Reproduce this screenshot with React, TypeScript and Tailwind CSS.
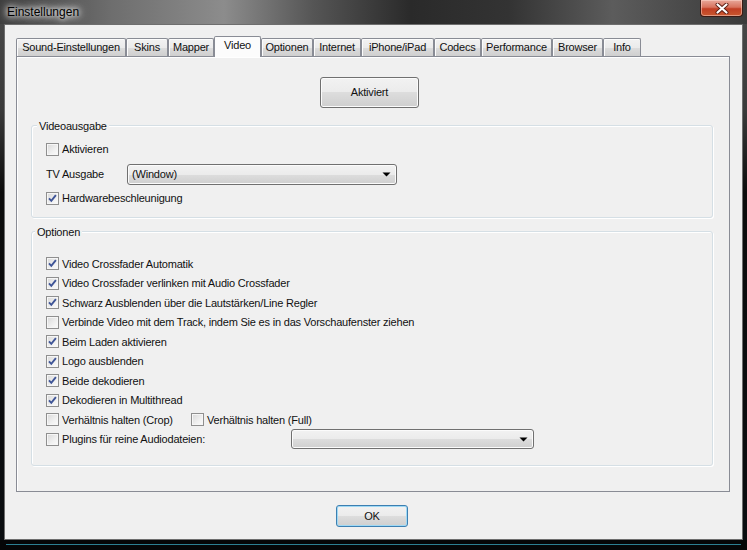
import React from "react";

function Check({ checked }: { checked?: boolean }) {
  return (
    <span className="w-[13px] h-[13px] shrink-0 border border-[#8f8f8f] bg-[linear-gradient(135deg,#d8d8d8_0%,#f0f0f0_60%,#fbfbfb_100%)] shadow-[inset_0_0_0_1px_#f6f6f6] flex items-center justify-center">
      {checked && (
        <svg width="11" height="11" viewBox="0 0 11 11">
          <path d="M2 5.4 L4.3 7.9 L8.9 2.2" fill="none" stroke="#3f5597" strokeWidth="1.9" strokeLinejoin="miter" />
        </svg>
      )}
    </span>
  );
}

function Arrow() {
  return (
    <svg width="9" height="5" viewBox="0 0 9 5" className="shrink-0">
      <path d="M0.5 0.5 H8.5 L4.5 4.5 Z" fill="#000" />
    </svg>
  );
}

function Combo({ w, h, text }: { w: string; h: string; text?: string }) {
  return (
    <div className={`${w} ${h} border border-[#707070] rounded-[3px] bg-[linear-gradient(to_bottom,#f2f2f2_0%,#ebebeb_50%,#dddddd_50%,#cfcfcf_100%)] shadow-[inset_0_0_0_1px_#fbfbfb] flex items-center pl-[4px] pr-[5px]`}>
      <span className="flex-1">{text}</span>
      <Arrow />
    </div>
  );
}

const tabs: { label: string; w: string; sel?: boolean }[] = [
  { label: "Sound-Einstellungen", w: "w-[110px]" },
  { label: "Skins", w: "w-[42px]" },
  { label: "Mapper", w: "w-[46px]" },
  { label: "Video", w: "w-[47px]", sel: true },
  { label: "Optionen", w: "w-[52px]" },
  { label: "Internet", w: "w-[48px]" },
  { label: "iPhone/iPad", w: "w-[73px]" },
  { label: "Codecs", w: "w-[47px]" },
  { label: "Performance", w: "w-[71px]" },
  { label: "Browser", w: "w-[51px]" },
  { label: "Info", w: "w-[38px]" },
];

const options: [string, boolean][] = [
  ["Video Crossfader Automatik", true],
  ["Video Crossfader verlinken mit Audio Crossfader", true],
  ["Schwarz Ausblenden über die Lautstärken/Line Regler", true],
  ["Verbinde Video mit dem Track, indem Sie es in das Vorschaufenster ziehen", false],
  ["Beim Laden aktivieren", true],
  ["Logo ausblenden", true],
  ["Beide dekodieren", true],
  ["Dekodieren in Multithread", true],
];

export default function App() {
  return (
    <div className="w-[747px] h-[550px] flex flex-col overflow-hidden bg-[linear-gradient(to_bottom,#4a4a4a_0%,#3a3a3a_20%,#0c0c0c_35%,#0a0d10_100%)] text-[11px] tracking-[-0.2px] text-[#111] [font-family:'Liberation_Sans',Arial,sans-serif]">
      {/* title bar */}
      <div className="h-[24px] shrink-0 flex items-start justify-between bg-[linear-gradient(90deg,#3e3e3e_0%,#6e6e6e_15%,#8c8c8c_30%,#555_42%,#2a2a2a_55%,#333_68%,#5c5c5c_82%,#3a3a3a_100%)]">
        <span className="mt-[5px] ml-[7px] text-[12px] tracking-normal leading-[14px] text-black [text-shadow:0_0_5px_#fff,0_0_8px_#fff,0_0_12px_rgba(255,255,255,0.8)]">
          Einstellungen
        </span>
        <div className="mr-[4px] w-[43px] h-[17px] rounded-b-[4px] border border-t-0 border-[#3b1a14] bg-[linear-gradient(to_bottom,#e8a89a_0%,#d8735e_45%,#c13e24_55%,#c9582f_100%)] shadow-[inset_0_0_0_1px_rgba(255,220,210,0.5)] flex items-center justify-center">
          <svg width="14" height="11" viewBox="0 0 14 11">
            <path d="M2.5 1.5 L11.5 9.5 M11.5 1.5 L2.5 9.5" stroke="#5a1d12" strokeWidth="4" strokeLinecap="round" />
            <path d="M2.5 1.5 L11.5 9.5 M11.5 1.5 L2.5 9.5" stroke="#fff" strokeWidth="2.2" strokeLinecap="round" />
          </svg>
        </div>
      </div>

      {/* client */}
      <div className="mx-[4px] h-[516px] shrink-0 border border-[#6e6e6e] bg-[#f0f0f0] pt-[11px] pl-[11px] flex flex-col">
        {/* tabs */}
        <div className="flex items-end h-[20px]">
          {tabs.map((t) =>
            t.sel ? (
              <div
                key={t.label}
                className={`${t.w} h-[21px] -mb-[1px] relative z-10 border border-b-0 border-[#898c95] rounded-t-[2px] bg-[#fcfcfc] flex items-start justify-center pt-[2px] leading-[13px]`}
              >
                {t.label}
              </div>
            ) : (
              <div
                key={t.label}
                className={`${t.w} h-[18px] border border-b-0 border-[#898c95] rounded-t-[2px] bg-[linear-gradient(to_bottom,#f2f2f2_0%,#ebebeb_50%,#dddddd_50%,#cfcfcf_100%)] shadow-[inset_1px_1px_0_#fcfcfc] flex items-center justify-center leading-[13px]`}
              >
                {t.label}
              </div>
            )
          )}
        </div>

        {/* panel */}
        <div className="w-[714px] h-[436px] border border-[#898c95] bg-[#f0f0f0] shadow-[inset_1px_1px_0_#fff] flex flex-col">
          <div className="mt-[20px] ml-[303px] w-[99px] h-[31px] border border-[#707070] rounded-[3px] bg-[linear-gradient(to_bottom,#f2f2f2_0%,#ebebeb_50%,#dddddd_50%,#cfcfcf_100%)] shadow-[inset_0_0_0_1px_#fbfbfb] flex items-center justify-center">
            Aktiviert
          </div>

          {/* Videoausgabe */}
          <div className="mt-[17px] ml-[14px] w-[682px] h-[93px] shrink-0 border border-[#d5dfe5] rounded-[3px] shadow-[inset_1px_1px_0_#fff,1px_1px_0_#fff] flex flex-col">
            <div className="-mt-[7px] ml-[5px] w-fit px-[2px] h-[14px] leading-[14px] bg-[#f0f0f0]">Videoausgabe</div>
            <div className="mt-[8px] ml-[14px] h-[16px] flex items-center gap-[3px]">
              <Check />
              <span>Aktivieren</span>
            </div>
            <div className="mt-[7px] ml-[14px] h-[21px] flex items-center">
              <span className="w-[81px]">TV Ausgabe</span>
              <Combo w="w-[270px]" h="h-[21px]" text="(Window)" />
            </div>
            <div className="mt-[5px] ml-[14px] h-[16px] flex items-center gap-[3px]">
              <Check checked />
              <span>Hardwarebeschleunigung</span>
            </div>
          </div>

          {/* Optionen */}
          <div className="mt-[13px] ml-[14px] w-[682px] h-[235px] shrink-0 border border-[#d5dfe5] rounded-[3px] shadow-[inset_1px_1px_0_#fff,1px_1px_0_#fff] flex flex-col">
            <div className="-mt-[7px] ml-[3px] w-fit px-[2px] h-[14px] leading-[14px] bg-[#f0f0f0]">Optionen</div>
            <div className="mt-[15px] ml-[14px] flex flex-col">
              {options.map(([label, c]) => (
                <div key={label} className="h-[19.5px] flex items-center gap-[3px]">
                  <Check checked={c} />
                  <span>{label}</span>
                </div>
              ))}
              <div className="h-[19.5px] flex items-center">
                <div className="w-[145px] flex items-center gap-[3px]">
                  <Check />
                  <span>Verhältnis halten (Crop)</span>
                </div>
                <div className="flex items-center gap-[3px]">
                  <Check />
                  <span>Verhältnis halten (Full)</span>
                </div>
              </div>
              <div className="h-[19.5px] flex items-center">
                <div className="w-[245px] flex items-center gap-[3px]">
                  <Check />
                  <span>Plugins für reine Audiodateien:</span>
                </div>
                <Combo w="w-[243px]" h="h-[20px]" />
              </div>
            </div>
          </div>
        </div>

        {/* OK */}
        <div className="mt-[13px] ml-[320px] w-[72px] h-[22px] border border-[#3c7fb1] rounded-[3px] bg-[linear-gradient(to_bottom,#f2f2f2_0%,#ebebeb_50%,#dddddd_50%,#cfcfcf_100%)] shadow-[inset_0_0_0_1px_#9fd9f5] flex items-center justify-center">
          OK
        </div>
      </div>

      {/* bottom frame */}
      <div className="flex-1 flex flex-col bg-[#050607]">
        <div className="h-[4px]" />
        <div className="mx-[6px] h-[1px] bg-[#2c7f92]" />
      </div>
    </div>
  );
}
